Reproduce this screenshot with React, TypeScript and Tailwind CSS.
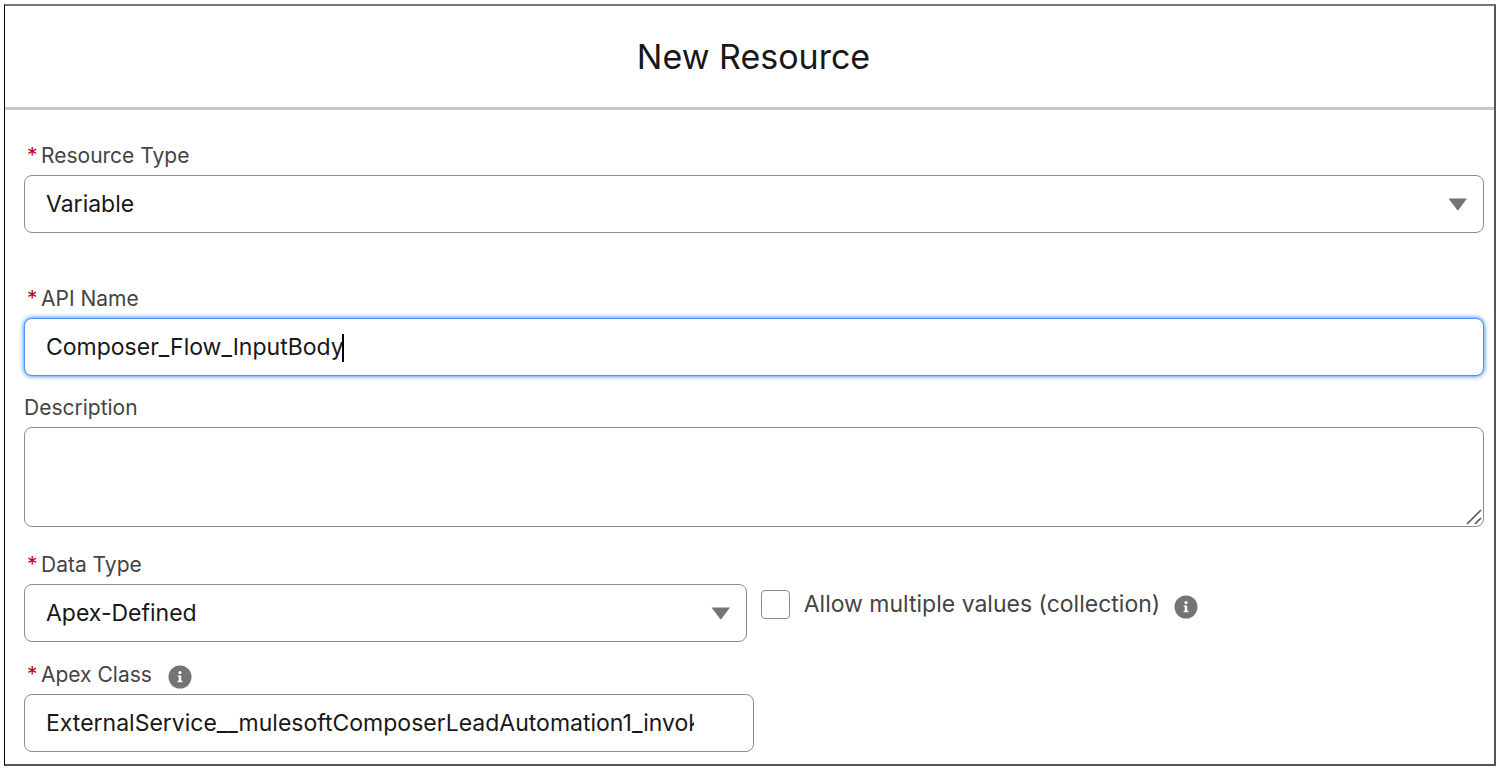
import { useState, type ReactNode } from "react";

const control =
  "block h-[58px] w-full rounded-lg border border-[#8c8c8c] bg-white pl-[21px] text-[23px] text-[#181818] outline-none";

function FieldLabel({ htmlFor, required, children }: { htmlFor: string; required?: boolean; children: ReactNode }) {
  return (
    <label htmlFor={htmlFor} className="flex h-6 items-center text-[21px] leading-6 text-[#444444]">
      {required && <span className="w-[17px] pl-[3px] text-[#ba0517]">*</span>}
      {children}
    </label>
  );
}

function InfoButton({ label }: { label: string }) {
  return (
    <button type="button" aria-label={label} className="mt-1 shrink-0">
      <svg width="24" height="24" viewBox="0 0 24 24">
        <circle cx="12" cy="12" r="11.5" fill="#747474" />
        <circle cx="12" cy="7.6" r="1.6" fill="#fff" />
        <path d="M9.8 10.4h3.400v5.400h1.300v1.500H9.600v-1.500h1.200v-3.900h-1z" fill="#fff" />
      </svg>
    </button>
  );
}

function SelectField({ id, options, value, onChange }: { id: string; options: string[]; value: string; onChange: (v: string) => void }) {
  return (
    <div className="relative mt-[7px]">
      <select id={id} value={value} onChange={(e) => onChange(e.target.value)} className={`${control} appearance-none pr-12`}>
        {options.map((option) => (
          <option key={option}>{option}</option>
        ))}
      </select>
      <svg className="pointer-events-none absolute top-[23px] right-4" width="20" height="13" viewBox="0 0 20 13">
        <path d="M.5 .5h18.500L10.400 12a.8.8 0 0 1-1.200 0z" fill="#747474" />
      </svg>
    </div>
  );
}

export default function App() {
  const [resourceType, setResourceType] = useState("Variable");
  const [apiName, setApiName] = useState("Composer_Flow_InputBody");
  const [description, setDescription] = useState("");
  const [dataType, setDataType] = useState("Apex-Defined");
  const [multiple, setMultiple] = useState(false);
  const [apexClass, setApexClass] = useState("ExternalService__mulesoftComposerLeadAutomation1_invokeFlow");

  return (
    <div className="bg-white pt-1 pr-0.5 pb-1 pl-1 font-['Inter',sans-serif]">
      <div className="border border-t-2 border-r-2 border-b-2 border-black border-t-[#777777] border-r-[#555555] border-b-[#555555]">
        <header className="flex h-[104px] items-center justify-center border-b-3 border-[#c9c9c9] pl-2">
          <h1 className="text-[34px] text-[#181818]">New Resource</h1>
        </header>

        <form className="pt-[34px] pr-2.5 pb-3 pl-[19px]">
          <FieldLabel htmlFor="resource-type" required>Resource Type</FieldLabel>
          <SelectField
            id="resource-type"
            options={["Variable", "Constant", "Formula", "Text Template"]}
            value={resourceType}
            onChange={setResourceType}
          />

          <div className="mt-[54px]">
            <FieldLabel htmlFor="api-name" required>API Name</FieldLabel>
            <div className="relative mt-[7px]">
              <input
                id="api-name"
                value={apiName}
                onChange={(e) => setApiName(e.target.value)}
                className="block h-[58px] w-full rounded-lg border border-[#4a94f7] bg-white pl-[21px] text-[23px] text-[#181818] caret-transparent shadow-[0_0_5px_#1b6fe8] outline-none"
              />
              {/* text cursor */}
              <span className="absolute top-4 left-[318px] h-7 w-0.5 bg-black" />
            </div>
          </div>

          <div className="mt-5">
            <FieldLabel htmlFor="description">Description</FieldLabel>
            <div className="relative mt-[7px]">
              <textarea
                id="description"
                value={description}
                onChange={(e) => setDescription(e.target.value)}
                className="block h-[100px] w-full resize-none rounded-lg border border-[#8c8c8c] bg-white px-[21px] py-3 text-[23px] text-[#181818] outline-none"
              />
              <svg className="pointer-events-none absolute right-0.5 bottom-0.5" width="16" height="16" viewBox="0 0 16 16" stroke="#555" strokeWidth="1.6">
                <path d="M1 15 15 1M9 15l6-6" />
              </svg>
            </div>
          </div>

          <div className="mt-[26px] flex gap-3.5">
            <div className="w-[49.5%]">
              <FieldLabel htmlFor="data-type" required>Data Type</FieldLabel>
              <SelectField
                id="data-type"
                options={["Apex-Defined", "Text", "Record", "Number", "Boolean"]}
                value={dataType}
                onChange={setDataType}
              />
            </div>
            <div className="flex items-center gap-3.5 pt-3.5">
              <input
                id="multiple"
                type="checkbox"
                checked={multiple}
                onChange={(e) => setMultiple(e.target.checked)}
                className="size-[29px] appearance-none rounded-sm border border-[#8c8c8c] bg-white checked:bg-[#0176d3]"
              />
              <label htmlFor="multiple" className="text-[23px] text-[#444444]">Allow multiple values (collection)</label>
              <InfoButton label="Allow multiple values help" />
            </div>
          </div>

          <div className="mt-[21px] w-1/2">
            <div className="flex h-6 items-center gap-4">
              <FieldLabel htmlFor="apex-class" required>Apex Class</FieldLabel>
              <InfoButton label="Apex Class help" />
            </div>
            <input
              id="apex-class"
              value={apexClass}
              onChange={(e) => setApexClass(e.target.value)}
              className={`${control} mt-[7px] pr-[59px]`}
            />
          </div>
        </form>
      </div>
    </div>
  );
}
